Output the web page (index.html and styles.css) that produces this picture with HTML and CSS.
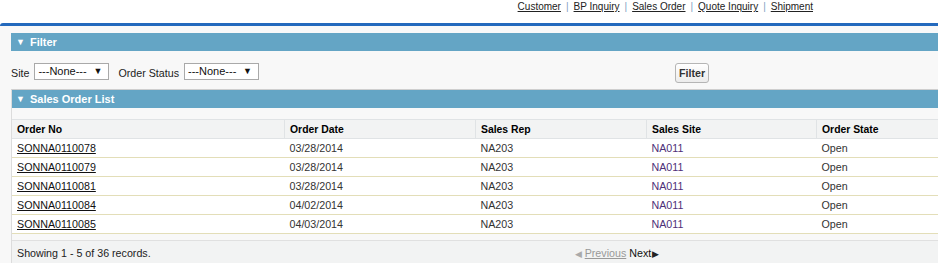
FILE: index.html
```html
<!DOCTYPE html>
<html lang="en">
<head>
  <meta charset="UTF-8" />
  <title>Sales Order</title>
  <link rel="stylesheet" href="styles.css">
</head>
<body>

  <div class="topnav">
    <a href="#">Customer</a><span class="sep">|</span>
    <a href="#">BP Inquiry</a><span class="sep">|</span>
    <a href="#">Sales Order</a><span class="sep">|</span>
    <a href="#">Quote Inquiry</a><span class="sep">|</span>
    <a href="#">Shipment</a>
  </div>

  <div class="page">

    <div class="section-head"><span class="twist">&#9660;</span>Filter</div>

    <div class="filters">
      <label>Site</label>
      <div class="select">---None--- <span class="arrow">&#9660;</span></div>
      <label class="gap">Order Status</label>
      <div class="select">---None--- <span class="arrow">&#9660;</span></div>
      <button class="btn">Filter</button>
    </div>

    <div class="list-block">
      <div class="section-head list-head"><span class="twist">&#9660;</span>Sales Order List</div>

      <table class="orders">
        <thead>
          <tr>
            <th class="c1">Order No</th>
            <th class="c2">Order Date</th>
            <th class="c3">Sales Rep</th>
            <th class="c4">Sales Site</th>
            <th>Order State</th>
          </tr>
        </thead>
        <tbody id="rows"></tbody>
      </table>

      <div class="pager">
        <span class="count">Showing 1 - 5 of 36 records.</span>
        <span class="nav">
          <span class="tri off">&#9664;</span><a href="#" class="prev">Previous</a>
          <span class="next">Next</span><span class="tri">&#9654;</span>
        </span>
      </div>
    </div>

  </div>

  <script>
    const orders = [
      { no: 'SONNA0110078', date: '03/28/2014' },
      { no: 'SONNA0110079', date: '03/28/2014' },
      { no: 'SONNA0110081', date: '03/28/2014' },
      { no: 'SONNA0110084', date: '04/02/2014' },
      { no: 'SONNA0110085', date: '04/03/2014' }
    ];

    const rows = document.getElementById('rows');
    orders.forEach(o => {
      rows.innerHTML += `
        <tr>
          <td><a href="#">${o.no}</a></td>
          <td>${o.date}</td>
          <td>NA203</td>
          <td class="site">NA011</td>
          <td>Open</td>
        </tr>`;
    });
  </script>

</body>
</html>
```

FILE: styles.css
```css
body {
  margin: 0;
  font-family: "Liberation Sans", Arial, sans-serif;
  font-size: 10.7px;
  color: #222;
  background: #fff;
  overflow: hidden;
}

.topnav {
  height: 23px;
  display: flex;
  justify-content: flex-end;
  align-items: flex-start;
  padding: 1px 125px 0 0;
  font-size: 10px;
  box-sizing: border-box;
}

.topnav a {
  color: #222;
  line-height: 12px;
}

.topnav .sep {
  color: #7f9fbf;
  margin: 0 5px;
  line-height: 12px;
}

.page {
  background: #f8f8f8;
  border-top: 3px solid #2369bd;
  border-top-left-radius: 3px;
  padding: 7px 0 0 11px;
  height: 240px;
  box-sizing: border-box;
}

.section-head {
  background: #64a5c5;
  color: #fff;
  font-weight: bold;
  font-size: 11px;
  height: 18px;
  line-height: 18px;
  padding-left: 5px;
}

.twist {
  font-size: 9px;
  margin-right: 5px;
  vertical-align: 1px;
}

.filters {
  display: flex;
  align-items: center;
  height: 20px;
  margin: 12px 0 6px 0;
}

.filters label {
  margin-right: 5px;
}

.filters label.gap {
  margin-left: 9px;
}

.select {
  width: 75px;
  height: 17px;
  box-sizing: border-box;
  border: 1px solid #a9a9a9;
  background: #fff;
  line-height: 15px;
  padding-left: 3px;
  color: #111;
  font-size: 11px;
  display: flex;
  margin-top: -3px;
}

.select .arrow {
  font-size: 9px;
  margin-left: auto;
  margin-right: 6px;
}

.btn {
  margin-left: 416px;
  height: 20px;
  padding: 0 3px;
  font-family: inherit;
  font-size: 10.7px;
  font-weight: bold;
  color: #333;
  border: 1px solid #b5b5b5;
  border-radius: 3px;
  background: linear-gradient(#fff, #ececec);
  align-self: flex-start;
}

.list-block {
  border-top: 1px solid #cfcfcf;
  border-left: 1px solid #dcdcdc;
}

.list-head {
  padding-left: 4px;
}

.orders {
  margin-top: 11px;
  width: 1100px;
  border-collapse: collapse;
  background: #fff;
  border-top: 1px solid #e0e3e5;
}

.orders th {
  background: #f2f3f3;
  font-weight: bold;
  font-size: 10.4px;
  color: #000;
  text-align: left;
  height: 18px;
  padding: 0 5px;
  border-left: 1px solid #e0e3e5;
  border-bottom: 1px solid #e0e3e5;
}

.orders th:first-child {
  border-left: none;
}

.orders th.c1 { width: 262px; }
.orders th.c2 { width: 180px; }
.orders th.c3 { width: 160px; }
.orders th.c4 { width: 159px; }

.orders td {
  height: 18px;
  padding: 0 5px;
  color: #333;
  border-bottom: 1px solid #e3deb8;
}

.orders td a {
  color: #111;
}

.orders td.site {
  color: #4e2f78;
}

.pager {
  margin-top: 6px;
  border-top: 1px solid #e0e0e0;
  background: #f2f3f3;
  height: 24px;
  display: flex;
  align-items: center;
  padding-left: 5px;
}

.pager .nav {
  margin-left: 424px;
}

.pager .tri {
  font-size: 9px;
  color: #222;
}

.pager .tri.off {
  color: #aaa;
  margin-right: 3px;
}

.pager .prev {
  color: #999;
}

.pager .next {
  color: #111;
  margin-right: 1px;
}
```
